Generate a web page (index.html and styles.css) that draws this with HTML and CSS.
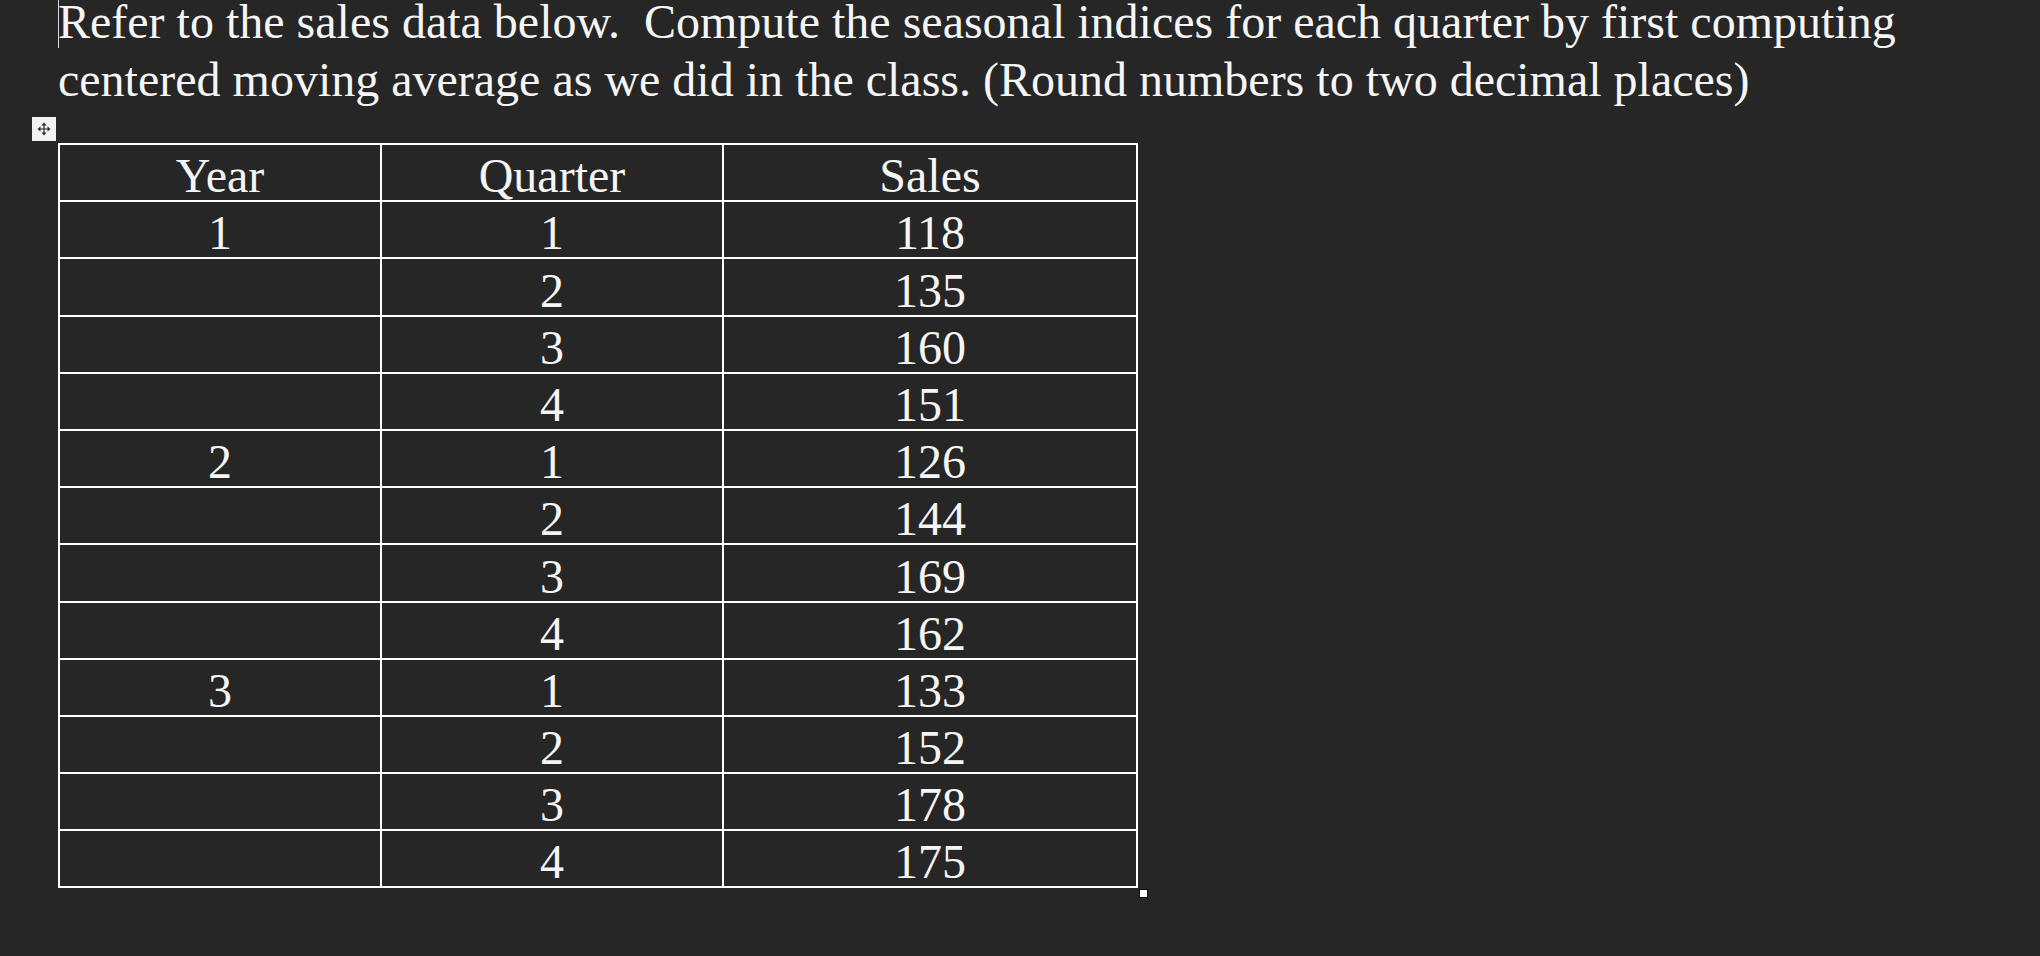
FILE: index.html
```html
<!DOCTYPE html>
<html lang="en">
<head>
<meta charset="utf-8">
<title>Sales data</title>
<link rel="stylesheet" href="styles.css">
</head>
<body>
<main class="doc">
  <p class="prompt"><span class="caret"></span>Refer to the sales data below.&nbsp; Compute the seasonal indices for each quarter by first computing centered moving average as we did in the class. (Round numbers to two decimal places)</p>
  <div class="table-wrap">
    <div class="move-handle" aria-hidden="true">
      <svg width="16" height="16" viewBox="0 0 16 16">
        <path d="M8 1.5 L10.5 4.5 H8.6 V7.4 H11.5 V5.5 L14.5 8 L11.5 10.5 V8.6 H8.6 V11.5 H10.5 L8 14.5 L5.5 11.5 H7.4 V8.6 H4.5 V10.5 L1.5 8 L4.5 5.5 V7.4 H7.4 V4.5 H5.5 Z" fill="#2a2a2a"/>
      </svg>
    </div>
    <table class="sales">
      <colgroup>
        <col class="c-year">
        <col class="c-quarter">
        <col class="c-sales">
      </colgroup>
      <thead>
        <tr><th>Year</th><th>Quarter</th><th>Sales</th></tr>
      </thead>
      <tbody>
        <tr><td>1</td><td>1</td><td>118</td></tr>
        <tr><td></td><td>2</td><td>135</td></tr>
        <tr><td></td><td>3</td><td>160</td></tr>
        <tr><td></td><td>4</td><td>151</td></tr>
        <tr><td>2</td><td>1</td><td>126</td></tr>
        <tr><td></td><td>2</td><td>144</td></tr>
        <tr><td></td><td>3</td><td>169</td></tr>
        <tr><td></td><td>4</td><td>162</td></tr>
        <tr><td>3</td><td>1</td><td>133</td></tr>
        <tr><td></td><td>2</td><td>152</td></tr>
        <tr><td></td><td>3</td><td>178</td></tr>
        <tr><td></td><td>4</td><td>175</td></tr>
      </tbody>
    </table>
    <div class="resize-row">
      <span class="resize-handle" aria-hidden="true"></span>
    </div>
  </div>
</main>
</body>
</html>
```

FILE: styles.css
```css
html, body {
  margin: 0;
  padding: 0;
  background: #262626;
}

body {
  color: #f5f5f5;
  font-family: "Liberation Serif", "Times New Roman", serif;
}

.doc {
  padding-left: 58px;
  width: 1960px;
}

.prompt {
  position: relative;
  margin: -7px 0 0 0;
  font-size: 48px;
  line-height: 58px;
}

.caret {
  position: absolute;
  left: 0;
  top: 7px;
  width: 1px;
  height: 48px;
  background: #d8d8d8;
}

.table-wrap {
  position: relative;
  width: 1092px;
  margin-top: 34px;
}

.move-handle {
  position: absolute;
  left: -26px;
  top: -26px;
  width: 24px;
  height: 24px;
  background: #f2f2f2;
  display: flex;
  align-items: center;
  justify-content: center;
}

.resize-row {
  display: flex;
  justify-content: flex-end;
  padding: 1px 2px 0 0;
}

.resize-handle {
  display: block;
  width: 7px;
  height: 7px;
  background: #ffffff;
  border: 1px solid #0e0e0e;
}

.sales {
  border-collapse: collapse;
  table-layout: fixed;
  width: 1080px;
  font-size: 48px;
  line-height: 1;
}

.c-year { width: 322px; }
.c-quarter { width: 342px; }
.c-sales { width: 414px; }

.sales th,
.sales td {
  border: 2px solid #ffffff;
  padding: 0;
  height: 55.2px;
  text-align: center;
  vertical-align: bottom;
  font-weight: normal;
}
```
